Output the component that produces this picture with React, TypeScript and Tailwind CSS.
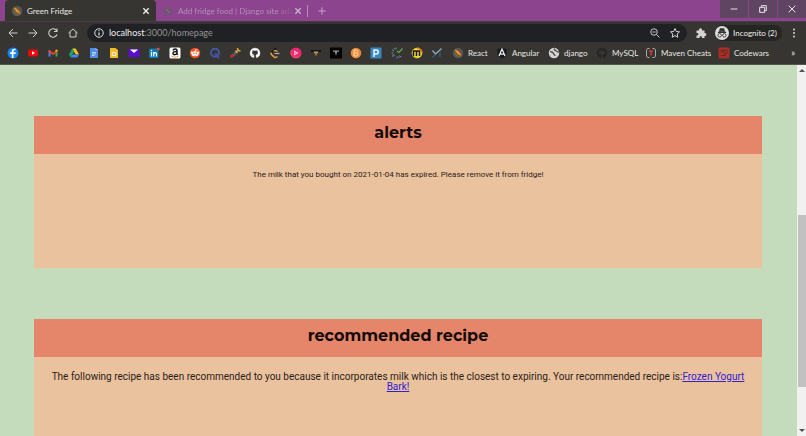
import React from "react";

type Mark = { name: string; art: React.ReactNode };

function Glyph({ children, size = "size-3" }: { children: React.ReactNode; size?: string }) {
  return (
    <svg viewBox="0 0 24 24" className={`${size} shrink-0`} fill="none" aria-hidden="true">
      {children}
    </svg>
  );
}

const githubPath =
  "M12 2.500a9.600 9.600 0 0 0-3.100 18.700c.5.1.7-.2.7-.5v-2.600c-2.600.5-3.300-.6-3.500-1.200-.3-.8-.8-1.300-1.200-1.500 1-.2 1.800.5 2.200 1.200.8 1.200 1.700 1 2.500.6.100-.6.300-1 .600-1.200-2.200-.300-4.400-1.100-4.400-4.800 0-1 .400-1.900 1-2.600-.100-.3-.4-1.300.1-2.600 0 0 .8-.3 2.700 1a9 9 0 0 1 4.800 0c1.900-1.300 2.700-1 2.700-1 .5 1.300.2 2.300.1 2.600.6.700 1 1.600 1 2.600 0 3.700-2.200 4.500-4.400 4.800.400.3.700.9.700 1.800v2.900c0 .3.200.6.700.5A9.600 9.600 0 0 0 12 2.500z";

const feather = (
  <>
    <circle cx="12" cy="12" r="10.500" fill="#5b5651" />
    <path d="M6 5c6 1 11 6 13 14C11 16 6 12 6 5z" fill="#ee8b2c" />
    <path d="M7 9c1 5 5 7 10 9" stroke="#7c4f24" strokeWidth="2" />
    <path d="M6 12c1 4 4 6 8 7" stroke="#5b9b4c" strokeWidth="1.500" />
  </>
);

const marks: Mark[] = [
  { name: "Facebook", art: <><circle cx="12" cy="12" r="11" fill="#1686ee" /><path d="M13 22v-8h4l.600-3.500H13V9c0-1.500.7-2.300 2.300-2.300h2V3.600C12 2.800 9.500 4.500 9.500 8.500v2H6.300V14h3.200v8z" fill="#fff" /></> },
  { name: "YouTube", art: <><rect x="2" y="5" width="20" height="14" rx="4" fill="#f00808" /><path d="M10 8.500v7l6-3.500z" fill="#fff" /></> },
  { name: "Gmail", art: <><path d="M3 6.500h4V19H3z" fill="#4285f4" /><path d="M17 6.500h4V19h-4z" fill="#34a853" /><path d="M3 7l9 7 9-7" stroke="#e94235" strokeWidth="4" /><path d="M17 10V6l2-1 2 1v2z" fill="#fbbc04" /></> },
  { name: "Drive", art: <><path d="M8.500 3h7L22 15h-6.500z" fill="#fbc11a" /><path d="M8.500 3L12 9.500 5.500 21 2 15z" fill="#16a765" /><path d="M9 15h13l-3.500 6h-13z" fill="#4285f4" /></> },
  { name: "Docs", art: <><path d="M4 2h11l5 4v16H4z" fill="#4d8ceb" /><path d="M8 11h8M8 14h8M8 17h5" stroke="#e5eefc" strokeWidth="1.500" /><path d="M15 2v4h5z" fill="#a9c9fb" /></> },
  { name: "Slides", art: <><path d="M4 2h11l5 4v16H4z" fill="#f4bc2d" /><path d="M8.500 11h7v6h-7z" stroke="#fff5d7" strokeWidth="2" /></> },
  { name: "Mail", art: <><rect x="1" y="4" width="22" height="16" rx="2" fill="#5c0bd0" /><path d="M4 5h16l-8 7z" fill="#fff" /></> },
  { name: "LinkedIn", art: <><rect x="2" y="3" width="19" height="19" rx="2" fill="#087bb8" /><path d="M7 10v9M11.500 19v-9M11.500 14c0-4 5.500-4 5.500 0v5" stroke="#fff" strokeWidth="2.500" /><circle cx="7" cy="7" r="1.700" fill="#fff" /><circle cx="20.500" cy="4" r="3" fill="#d84e3c" /></> },
  { name: "Amazon", art: <><rect x="1" y="1" width="22" height="22" rx="3" fill="#fff" /><path d="M8 7c1-4 8-4 8 0v7l1.500 1.500M16 9c-5-.500-8 1-8 3.500 0 4 6 3.500 8 0" stroke="#111" strokeWidth="3" /><path d="M5 18c4 3 10 3 14 0" stroke="#f2a23b" strokeWidth="2" /></> },
  { name: "Reddit", art: <><circle cx="12" cy="12" r="10.500" fill="#f5511e" /><ellipse cx="12" cy="13.500" rx="7" ry="5" fill="#fff" /><circle cx="5.500" cy="11" r="2" fill="#fff" /><circle cx="18.500" cy="11" r="2" fill="#fff" /><path d="M12 9l1-4 4 1" stroke="#fff" strokeWidth="1.500" /><circle cx="9.500" cy="12.500" r="1.500" fill="#f5511e" /><circle cx="14.500" cy="12.500" r="1.500" fill="#f5511e" /><path d="M9.500 16c2 1 3 1 5 0" stroke="#f5511e" /></> },
  { name: "Quizlet", art: <><circle cx="12" cy="11.500" r="8" stroke="#4255a8" strokeWidth="4" /><path d="M12 13l8 9" stroke="#4255a8" strokeWidth="4" /></> },
  { name: "Toolbox", art: <><path d="M3 20L12 14" stroke="#a9323b" strokeWidth="6" /><path d="M10 14l7-6" stroke="#43618f" strokeWidth="5" /><path d="M17 2l1 5 5 1M13 7l4 5" stroke="#e4ab31" strokeWidth="3" /></> },
  { name: "GitHub", art: <path d={githubPath} fill="#fff" stroke="#fff" /> },
  { name: "LeetCode", art: <><path d="M5 11c-1 1-1 3 0 4l5 5c2 1.500 4 1 7-1" stroke="#eda53b" strokeWidth="3" /><path d="M14 2L5 11" stroke="#151515" strokeWidth="3" /><path d="M9 8c4-2 6-1 8 2" stroke="#eda53b" strokeWidth="2.500" /><path d="M11 13h10" stroke="#aaa9a3" strokeWidth="2.500" /></> },
  { name: "Video", art: <><circle cx="12" cy="12" r="11" fill="#ef2873" /><path d="M3 6c-3 8 1 15 9 15 4 0 7-2 9-4" stroke="#f45b4f" strokeWidth="2" /><path d="M8 7v10l9-5z" fill="#ffd3e3" /><path d="M9 12h4" stroke="#ef2873" strokeWidth="2" /></> },
  { name: "Topcoder", art: <><path d="M2 6h20v4H2z" fill="#171514" /><path d="M7 9h10l-3 5-2 4-2-4z" fill="#d0a469" /><path d="M12 10v7" stroke="#6b4a25" strokeWidth="1.500" /></> },
  { name: "Treehouse", art: <><path d="M0 1h24v22H0z" fill="#020202" /><path d="M6 7h12v3l-2-1h-2l-2 9-2-9H8l-2 1z" fill="#a8a4a2" /></> },
  { name: "Basics", art: <><circle cx="12" cy="12" r="10.500" fill="#ec8a38" /><path d="M8 6v12h4c5 0 5-6 1-6 4 0 3-6-1-6zM8 12h5" stroke="#ffe1ad" strokeWidth="2" /></> },
  { name: "Pandas", art: <><path d="M1 1h22v22H1z" fill="#3789be" /><path d="M8 20V6h4c6 0 6 8 0 8H8" stroke="#e9f6ff" strokeWidth="3" /></> },
  { name: "Spark", art: <><path d="M10 5V1M6 8L2 5M5 12H1M7 16l-4 4M12 19v4M17 17l4 4" stroke="#4e9da0" strokeWidth="2" /><path d="M8 5l-2-3M6 15l-4 2M15 18l2 4" stroke="#82679d" strokeWidth="2" /><path d="M12 8l4 3 7-8" stroke="#62a744" strokeWidth="2.500" /></> },
  { name: "Maven", art: <><circle cx="12" cy="12" r="10.500" fill="#f3d730" /><path d="M12 2a10 10 0 0 1 10 10" stroke="#e9702d" strokeWidth="3" /><path d="M2 12a10 10 0 0 0 10 10" stroke="#8ca63c" strokeWidth="2" /><path d="M5 18V8h12v10M11 8v10" stroke="#1b1919" strokeWidth="3" /></> },
  { name: "Marker", art: <><path d="M3 7l6 7L21 3" stroke="#91aac0" strokeWidth="2.500" /><path d="M3 21l6-6M18 9v11" stroke="#35597c" strokeWidth="3" /></> },
];

const named: (Mark & { width: string })[] = [
  { name: "React", width: "w-11", art: feather },
  { name: "Angular", width: "w-[52px]", art: <><path d="M12 1l10 4-1.500 13L12 23l-8.500-5L2 5z" fill="#171b21" /><path d="M6 18l6-14 6 14M8.500 14h7" stroke="#f2f2f2" strokeWidth="2.500" /></> },
  { name: "django", width: "w-12", art: <><circle cx="12" cy="12" r="10.500" fill="#d4d3d1" /><path d="M4 9c4 0 6 1 7 4s3 2 3 5M13 3c-2 4 3 3 4 5s2 2 5 2" stroke="#454442" strokeWidth="2.500" /></> },
  { name: "MySQL", width: "w-[49px]", art: <path d={githubPath} fill="#252727" stroke="#252727" /> },
  { name: "Maven Cheats", width: "w-[73px]", art: <><path d="M9 3H5L3 6v12l2 3h4M15 3h4l2 3v12l-2 3h-4" stroke="#aaa9a7" strokeWidth="2" /><path d="M8 8h8M12 7v10" stroke="#ca3e43" strokeWidth="3" /></> },
  { name: "Codewars", width: "w-[54px]", art: <><rect x="1" y="1" width="22" height="22" rx="2" fill="#a92f26" /><path d="M5 6c5 4 9-2 14 1M6 11c3-5 11 2 8 6M19 9c-1 6-8 10-13 8" stroke="#612520" strokeWidth="2" /></> },
];

function Tabs() {
  return (
    <header className="flex h-[21px] items-center bg-[#8b448d] pl-[5px]">
      <div className="flex h-full w-[151px] shrink-0 items-center rounded-t-[4px] bg-[#363532] px-1.5 text-[#e8e7e4]">
        <Glyph>{feather}</Glyph>
        <span className="ml-1 flex-1">Green Fridge</span>
        <button aria-label="Close Green Fridge" className="size-2">
          <Glyph size="size-2"><path d="M4 4l16 16M20 4L4 20" stroke="#f0efed" strokeWidth="4" /></Glyph>
        </button>
      </div>
      <div className="flex h-full w-[151px] shrink-0 items-center px-1.5 text-[#b58eb5]">
        <Glyph><circle cx="12" cy="12" r="9" fill="#75507a" /><path d="M8 8l8 8" stroke="#806a72" strokeWidth="3" /></Glyph>
        <span className="ml-1 whitespace-nowrap [mask-image:linear-gradient(to_right,black_85%,transparent)]">Add fridge food | Django site adn</span>
        <button aria-label="Close Django tab" className="ml-auto size-2 shrink-0">
          <Glyph size="size-2"><path d="M4 4l16 16M20 4L4 20" stroke="#cdb0cd" strokeWidth="4" /></Glyph>
        </button>
      </div>
      <button aria-label="New tab" className="flex h-3 shrink-0 items-center border-l border-[#b58eb5] pl-2.5">
        <Glyph size="size-2"><path d="M12 1v22M1 12h22" stroke="#c7a5c8" strokeWidth="3" /></Glyph>
      </button>
      <div className="ml-auto flex h-[18px] shrink-0 gap-px self-start">
        <button aria-label="Minimize" className="grid w-7 place-items-center bg-[#5f4561]"><Glyph size="size-2"><path d="M2 12h20" stroke="#e9e2e9" strokeWidth="3" /></Glyph></button>
        <button aria-label="Restore" className="grid w-7 place-items-center bg-[#5f4561]"><Glyph size="size-2"><path d="M2 7h15v15H2zM7 7V2h15v15h-5" stroke="#e9e2e9" strokeWidth="3" /></Glyph></button>
        <button aria-label="Close" className="grid w-7 place-items-center bg-[#5f4561]"><Glyph size="size-2"><path d="M2 2l20 20M22 2L2 22" stroke="#e9e2e9" strokeWidth="3" /></Glyph></button>
      </div>
    </header>
  );
}

function Toolbar() {
  return (
    <div className="flex h-[23px] items-center border-t border-[#4b394a] bg-[#363532] pl-[7px] pr-1.5">
      <nav className="flex gap-2">
        <button aria-label="Back"><Glyph><path d="M21 12H4M12 4l-8 8 8 8" stroke="#d2d1cf" strokeWidth="2" /></Glyph></button>
        <button aria-label="Forward"><Glyph><path d="M3 12h17M12 4l8 8-8 8" stroke="#d2d1cf" strokeWidth="2" /></Glyph></button>
        <button aria-label="Reload"><Glyph><path d="M19 7a8.500 8.500 0 1 0 1 8M20 3v6h-6" stroke="#d2d1cf" strokeWidth="2.200" /></Glyph></button>
        <button aria-label="Home"><Glyph><path d="M3 12l9-8 9 8M6 10v10h12V10" stroke="#d2d1cf" strokeWidth="2" /></Glyph></button>
      </nav>
      <div className="ml-2 flex h-[18px] flex-1 items-center rounded-full bg-[#202124] px-1.5">
        <Glyph><circle cx="12" cy="12" r="8.500" stroke="#dfdfde" strokeWidth="2" /><path d="M12 11v6M12 6.500v2" stroke="#dfdfde" strokeWidth="2.500" /></Glyph>
        <div className="ml-1 flex-1 text-[9px] leading-3 text-[#93948f]" role="textbox" aria-label="Address">
          <span className="text-[#eeeeec]">localhost</span>:3000/homepage
        </div>
        <button aria-label="Zoom out" className="mr-2"><Glyph><circle cx="10" cy="10" r="6.500" stroke="#c9c9c7" strokeWidth="2" /><path d="M15 15l6 6M7 10h6" stroke="#c9c9c7" strokeWidth="2" /></Glyph></button>
        <button aria-label="Bookmark this page"><Glyph><path d="M12 3l2.700 6 6.300.7-4.700 4.300 1.300 6.500-5.600-3.300-5.600 3.300L7.700 14 3 9.700 9.300 9z" stroke="#d7d6d4" strokeWidth="2" /></Glyph></button>
      </div>
      <button aria-label="Extensions" className="ml-2"><Glyph><path d="M3 7h5c-1-6 7-6 6 0h5v5c5-1 5 7 0 6v4h-5c1-5-6-5-5 0H3v-5c5 1 5-6 0-5z" fill="#d5d4d2" /></Glyph></button>
      <button className="ml-2 flex h-4 w-[67px] items-center rounded-full bg-[#252523] text-[#efeeeb]">
        <Glyph size="size-3.5"><circle cx="12" cy="12" r="12" fill="#dedede" /><path d="M5 11h14M8 10l1-5h6l1 5" stroke="#343434" strokeWidth="2" fill="#343434" /><circle cx="8" cy="16" r="3" stroke="#343434" strokeWidth="1.500" /><circle cx="16" cy="16" r="3" stroke="#343434" strokeWidth="1.500" /></Glyph>
        <span className="ml-1 whitespace-nowrap">Incognito (2)</span>
      </button>
      <button aria-label="Menu" className="ml-1.5"><Glyph><circle cx="12" cy="5" r="2" fill="#d5d4d2" /><circle cx="12" cy="12" r="2" fill="#d5d4d2" /><circle cx="12" cy="19" r="2" fill="#d5d4d2" /></Glyph></button>
    </div>
  );
}

function Bookmarks() {
  return (
    <nav aria-label="Bookmarks" className="flex h-[21px] items-center border-b border-[#52584d] bg-[#363532] pb-[3px] pl-[7px] text-[#e8e7e4]">
      <div className="flex w-[436px] shrink-0 justify-between">
        {marks.map((m) => <a key={m.name} href="#" aria-label={m.name}><Glyph>{m.art}</Glyph></a>)}
      </div>
      <div className="ml-[9px] flex shrink-0">
        {named.map((m) => (
          <a key={m.name} href="#" className={`${m.width} flex shrink-0 items-center gap-1 whitespace-nowrap`}>
            <Glyph>{m.art}</Glyph>{m.name}
          </a>
        ))}
      </div>
      <button aria-label="More bookmarks" className="ml-auto mr-[11px] text-[9px] leading-3">»</button>
    </nav>
  );
}

function Card({ title, children }: { title: string; children: React.ReactNode }) {
  return (
    <section className="min-h-[152px] shrink-0 bg-[#eac29d] text-center text-[#2b211b]">
      <h2 className="flex h-[38px] items-center justify-center bg-[#e5866a] pb-1 font-['Montserrat','Inter',sans-serif] text-[16px] leading-5 font-bold text-[#130b09]">{title}</h2>
      {children}
    </section>
  );
}

export default function App() {
  return (
    <div className="flex h-screen flex-col overflow-hidden font-['Lato',sans-serif] text-[8px] leading-3">
      <Tabs />
      <Toolbar />
      <Bookmarks />
      <div className="flex min-h-0 flex-1 bg-[#c4dbbc]">
        <main className="flex min-w-0 flex-1 flex-col gap-[51px] overflow-hidden pl-[34px] pr-[35px] pt-[51px] font-['Roboto',sans-serif]">
          <Card title="alerts">
            <p className="pt-4 text-[8px] leading-[10px]">The milk that you bought on 2021-01-04 has expired. Please remove it from fridge!</p>
          </Card>
          <Card title="recommended recipe">
            <p className="px-2 pt-[15px] text-[10px] leading-[10px]">
              The following recipe has been recommended to you because it incorporates milk which is the closest to expiring. Your recommended recipe is:
              <a href="#" className="text-[#3020d0] underline">Frozen Yogurt Bark!</a>
            </p>
          </Card>
        </main>
        <div aria-hidden="true" className="flex w-[9px] shrink-0 flex-col items-center bg-[#f1f1f1] py-[3px]">
          <svg viewBox="0 0 6 4" className="h-1 w-1.5"><path d="M0 4l3-3 3 3z" fill="#505050" /></svg>
          <div className="flex-[143]" />
          <div className="w-2 flex-[172] bg-[#c1c1c1]" />
          <div className="flex-[42]" />
          <svg viewBox="0 0 6 4" className="h-1 w-1.5"><path d="M0 0l3 3 3-3z" fill="#505050" /></svg>
        </div>
      </div>
    </div>
  );
}
